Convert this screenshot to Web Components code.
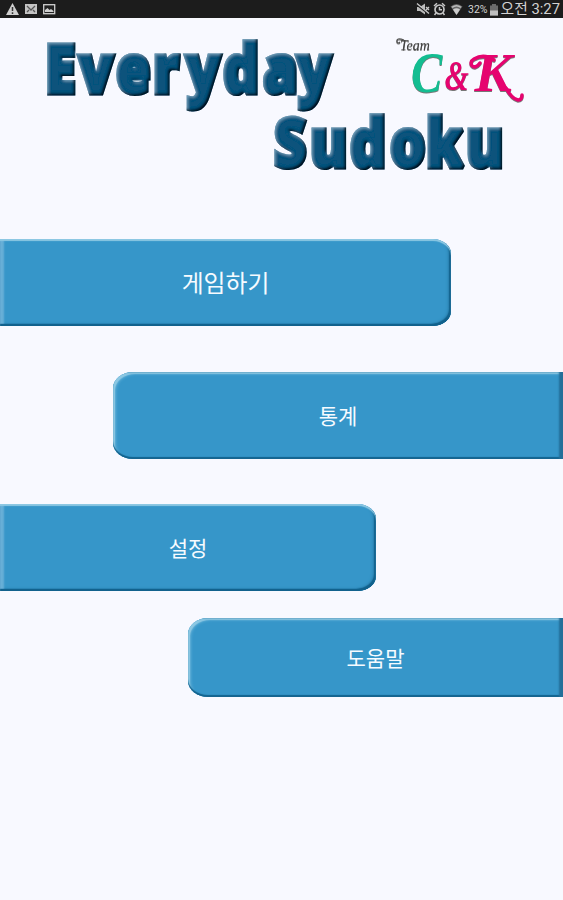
<!DOCTYPE html>
<html lang="ko">
<head>
<meta charset="UTF-8">
<meta name="viewport" content="width=device-width, initial-scale=1">
<title>Everyday Sudoku</title>
<style>
    body {
        margin: 0;
        background: #f8f9ff;
        font-family: Roboto, "Noto Sans CJK KR", sans-serif;
    }
</style>
</head>
<body>
<sudoku-home></sudoku-home>

<script>
class StatusBar extends HTMLElement {
    constructor() {
        super();
        this.attachShadow({ mode: 'open' });
        this.shadowRoot.innerHTML = `
            <style>
                :host {
                    display: flex;
                    justify-content: space-between;
                    align-items: center;
                    box-sizing: border-box;
                    height: 18px;
                    padding: 0 3px 0 5px;
                    background: #1c1c1c;
                    color: #d2d2d2;
                }
                .group {
                    display: flex;
                    align-items: center;
                    height: 18px;
                }
                .left { gap: 4px; }
                svg { display: block; }
                .battery-text { font-size: 10.5px; margin: 0 1px 0 4px; }
                .time { font-size: 14.8px; line-height: 18px; margin-left: 2px; white-space: nowrap; }
            </style>
            <div class="group left">
                <svg width="15" height="14" viewBox="0 0 15 14">
                    <path d="M7.5 1 L14 13 H1 Z" fill="#d0d0d0"/>
                    <path d="M7.5 5 V9 M7.5 10.3 V12" stroke="#333" stroke-width="1.5"/>
                </svg>
                <svg width="14" height="12" viewBox="0 0 14 12">
                    <rect x="1" y="1" width="12" height="10" fill="#c4c4c4"/>
                    <path d="M3 3 L7 7 L11 3 M3 9 L5 7 M11 9 L9 7" fill="none" stroke="#555" stroke-width="1.3"/>
                </svg>
                <svg width="14" height="12" viewBox="0 0 14 12">
                    <rect x="1.7" y="1.7" width="11" height="9" fill="#222" stroke="#d0d0d0" stroke-width="1.3"/>
                    <path d="M3 9 V7 L5.5 5 L7.5 7 L9 6 L11.5 8 V9 Z" fill="#d0d0d0"/>
                </svg>
            </div>
            <div class="group">
                <svg width="15" height="14" viewBox="0 0 15 14">
                    <path d="M2 5 H5 L10 1.5 V12.5 L5 9 H2 Z" fill="#bcbcbc"/>
                    <path d="M1 2 L14 12" stroke="#222" stroke-width="2"/>
                    <path d="M2 1.5 L14 11.5 M11 5 L14 8 M14 5 L11 8" stroke="#c8c8c8" stroke-width="1.3"/>
                </svg>
                <svg width="15" height="14" viewBox="0 0 15 14" style="margin-left:2px">
                    <circle cx="7.5" cy="7.5" r="4.5" fill="none" stroke="#c8c8c8" stroke-width="1.7"/>
                    <path d="M7.5 5 V7.8 H10 M2 4 L5 1.3 M10 1.3 L13 4 M4 11 L2.5 13 M11 11 L12.5 13" fill="none" stroke="#c8c8c8" stroke-width="1.5"/>
                </svg>
                <svg width="15" height="14" viewBox="0 0 15 14" style="margin-left:2px">
                    <path d="M1.5 4.5 Q7.5 -0.5 13.5 4.5 L7.5 13 Z" fill="#666"/>
                    <path d="M4 7.5 Q7.5 5 11 7.5 L7.5 13 Z" fill="#ccc"/>
                    <path d="M3 5.4 Q7.5 2 12 5.4" fill="none" stroke="#bbb" stroke-width="1.4"/>
                </svg>
                <span class="battery-text">32%</span>
                <svg width="10" height="13" viewBox="0 0 10 13">
                    <path d="M3 1 H7 V2.5 H9 V12.5 H1 V2.5 H3 Z" fill="#6c6c6c"/>
                    <rect x="1" y="7.5" width="8" height="5" fill="#bfbfbf"/>
                </svg>
                <span class="time">오전 3:27</span>
            </div>
        `;
    }
}
customElements.define('status-bar', StatusBar);

// One word of the title with an embossed edge. "stops" holds the x of each letter.
class EmbossedWord extends HTMLElement {
    constructor() {
        super();
        this.attachShadow({ mode: 'open' });
    }

    connectedCallback() {
        const word = this.getAttribute('word');
        const width = Number(this.getAttribute('width'));
        const squeeze = 0.84;
        const xs = this.getAttribute('stops').split(' ').map(x => x / squeeze).join(' ');
        this.shadowRoot.innerHTML = `
            <style>
                :host { display: block; }
                svg { display: block; overflow: visible; }
                text {
                    font-family: "Open Sans", "Noto Sans", sans-serif;
                    font-size: 67px;
                    font-weight: 800;
                    fill: #07527c;
                    stroke: #07527c;
                    stroke-width: 5;
                    stroke-linejoin: miter;
                    stroke-miterlimit: 2;
                }
            </style>
            <svg width="${width}" height="74" viewBox="0 0 ${width} 74">
                <defs>
                    <filter id="emboss" x="-5%" y="-20%" width="110%" height="140%">
                        <feOffset in="SourceAlpha" dx="-2.2" dy="-2" result="up"/>
                        <feGaussianBlur in="up" stdDeviation="1" result="upSoft"/>
                        <feComposite in="SourceAlpha" in2="upSoft" operator="out" result="darkEdge"/>
                        <feFlood flood-color="#000814"/>
                        <feComposite in2="darkEdge" operator="in" result="dark"/>
                        <feOffset in="SourceAlpha" dx="1.3" dy="1.3" result="down"/>
                        <feGaussianBlur in="down" stdDeviation="1.5" result="downSoft"/>
                        <feComposite in="SourceAlpha" in2="downSoft" operator="out" result="lightEdge"/>
                        <feFlood flood-color="#7fb0ca" flood-opacity="0.85"/>
                        <feComposite in2="lightEdge" operator="in" result="light"/>
                        <feMerge>
                            <feMergeNode in="SourceGraphic"/>
                            <feMergeNode in="light"/>
                            <feMergeNode in="dark"/>
                        </feMerge>
                    </filter>
                </defs>
                <g filter="url(#emboss)">
                    <text transform="scale(${squeeze} 1)" x="${xs}" y="57">${word}</text>
                </g>
            </svg>
        `;
    }
}
customElements.define('embossed-word', EmbossedWord);

class TeamLogo extends HTMLElement {
    constructor() {
        super();
        this.attachShadow({ mode: 'open' });
        this.shadowRoot.innerHTML = `
            <style>
                :host { display: block; }
                svg { display: block; overflow: visible; filter: drop-shadow(0.8px 1px 0.7px #777); }
                text { font-family: "Liberation Serif", serif; font-style: italic; font-weight: bold; }
                .team { font-size: 14px; font-weight: normal; fill: #444; }
                .c { font-size: 56px; fill: #13bd91; }
                .k { fill: #e6036f; }
            </style>
            <svg width="130" height="74" viewBox="0 0 130 74">
                <text class="team" x="5" y="14">Team</text>
                <path d="M9 4 Q1 1 2 6 Q3 8 5 6" fill="none" stroke="#555" stroke-width="1.2"/>
                <text class="c" transform="scale(.84 1)" x="19" y="56">C</text>
                <text class="k" font-size="43" transform="scale(.72 1)" x="69" y="54">&amp;</text>
                <text class="k" font-size="55" transform="scale(1.02 1)" x="78" y="55">K</text>
                <path d="M85 27 C79 36 72 27 79 23 C86 19 93 20 99 24" fill="none" stroke="#e6036f" stroke-width="3.5" stroke-linecap="round"/>
                <path d="M111 52 Q117 63 123 64 Q127 64 127 59" fill="none" stroke="#e6036f" stroke-width="3.5" stroke-linecap="round"/>
            </svg>
        `;
    }
}
customElements.define('team-logo', TeamLogo);

class MenuButton extends HTMLElement {
    constructor() {
        super();
        this.attachShadow({ mode: 'open' });
        this.shadowRoot.innerHTML = `
            <style>
                :host {
                    display: flex;
                    align-items: center;
                    justify-content: center;
                    box-sizing: border-box;
                    height: 87px;
                    padding-top: 3px;
                    background: #3696c9;
                    color: #f6fbff;
                    font-size: 21px;
                    cursor: pointer;
                }
                :host([side="left"]) {
                    border-radius: 0 18px 18px 0 / 0 15px 15px 0;
                    box-shadow: inset 0 2px 1px #8dc8e3, inset 0 -2px 1px #12628d, inset -2px -2px 1px #12628d, inset 4px 0 2px #68afd7, inset -3px -2px 3px #2a80ae;
                }
                :host([side="right"]) {
                    align-self: flex-end;
                    border-radius: 20px 0 0 20px / 16px 0 0 16px;
                    box-shadow: inset -4px 0 2px #236f99, inset 0 -2px 1px #12628d, inset 2px 2px 1px #8dc8e3, inset 3px 2px 3px #62b0d8;
                }
                span { line-height: 30px; }
            </style>
            <span><slot></slot></span>
        `;
    }
}
customElements.define('menu-button', MenuButton);

class SudokuHome extends HTMLElement {
    constructor() {
        super();
        this.attachShadow({ mode: 'open' });
        this.shadowRoot.innerHTML = `
            <style>
                :host { display: block; height: 900px; overflow: hidden; }
                header {
                    display: flex;
                    flex-direction: column;
                    height: 203px;
                    padding-top: 18px;
                }
                .top { display: flex; padding-left: 46px; gap: 59px; }
                .bottom { padding-left: 273px; }
                nav { display: flex; flex-direction: column; }
                .play { width: 451px; font-size: 23.8px; }
                .stats { width: 450px; margin-top: 46px; }
                .settings { width: 376px; margin-top: 45px; }
                .help { width: 375px; height: 79px; margin-top: 27px; }
            </style>
            <status-bar></status-bar>
            <header>
                <div class="top">
                    <embossed-word word="Everyday" width="290" stops="-1 33 70 107 140 177 217 251"></embossed-word>
                    <team-logo></team-logo>
                </div>
                <div class="bottom">
                    <embossed-word word="Sudoku" width="232" stops="1 37 77 117 153 193"></embossed-word>
                </div>
            </header>
            <nav>
                <menu-button class="play" side="left">게임하기</menu-button>
                <menu-button class="stats" side="right">통계</menu-button>
                <menu-button class="settings" side="left">설정</menu-button>
                <menu-button class="help" side="right">도움말</menu-button>
            </nav>
        `;
    }
}
customElements.define('sudoku-home', SudokuHome);
</script>
</body>
</html>
